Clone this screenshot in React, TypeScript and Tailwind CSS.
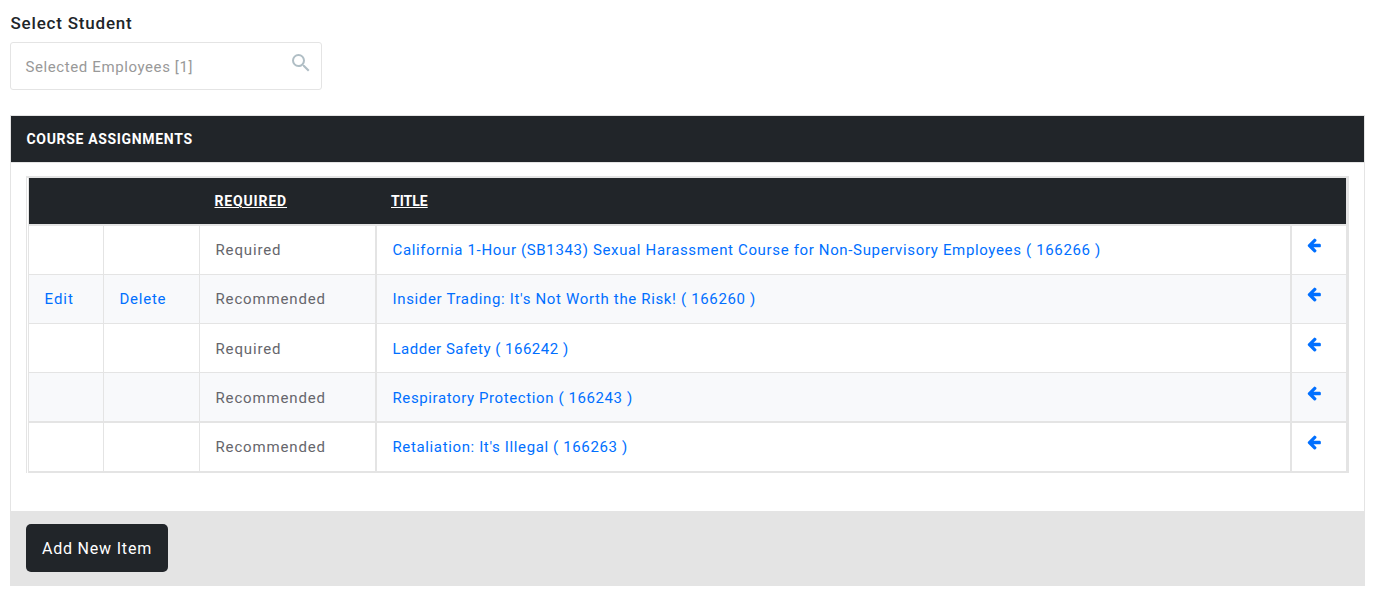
import { MdSearch } from "react-icons/md";
import clsx from "clsx";

type Course = {
  id: number;
  required: string;
  title: string;
  editable?: boolean;
  rowClass: string;
  cellClass: string;
  titleClass: string;
};

const courses: Course[] = [
  {
    id: 166266,
    required: "Required",
    title: "California 1-Hour (SB1343) Sexual Harassment Course for Non-Supervisory Employees",
    rowClass: "h-[49px] bg-white",
    cellClass: "border-b pt-[12px]",
    titleClass: "tracking-[0.65px]",
  },
  {
    id: 166260,
    required: "Recommended",
    title: "Insider Trading: It's Not Worth the Risk!",
    editable: true,
    rowClass: "h-[49px] bg-[#f8f9fb]",
    cellClass: "border-b pt-[12px]",
    titleClass: "tracking-[0.65px]",
  },
  {
    id: 166242,
    required: "Required",
    title: "Ladder Safety",
    rowClass: "h-[49px] bg-white",
    cellClass: "border-b pt-[13px]",
    titleClass: "tracking-[0.5px]",
  },
  {
    id: 166243,
    required: "Recommended",
    title: "Respiratory Protection",
    rowClass: "h-[50px] bg-[#f8f9fb]",
    cellClass: "border-b-2 pt-[13px]",
    titleClass: "tracking-[0.6px]",
  },
  {
    id: 166263,
    required: "Recommended",
    title: "Retaliation: It's Illegal",
    rowClass: "h-[50px] bg-white",
    cellClass: "border-b-2 pt-[12px]",
    titleClass: "tracking-[0.63px]",
  },
];

function ArrowLeftIcon() {
  return (
    <svg viewBox="0 0 1536 1792" fill="currentColor" className="-mt-px -ml-px h-4 w-[14px] text-[#006fff]">
      <path d="M1536 896v128q0 53-32.5 90.5t-84.5 37.5h-704l293 294q38 36 38 90t-38 90l-75 76q-37 37-90 37-52 0-91-37l-651-652q-37-37-37-90 0-52 37-91l651-650q38-38 91-38 52 0 90 38l75 74q38 38 38 91t-38 91l-293 293h704q52 0 84.5 37.5t32.5 90.5z" />
    </svg>
  );
}

function StudentPicker() {
  return (
    <div>
      <label className="block pl-[0.5px] text-[17px] leading-6 font-medium tracking-[0.8px] text-[#212529]">Select Student</label>
      <div className="mt-[7px] flex h-12 w-[312px] justify-between rounded-[3px] border border-[#e4e4e4] pl-[14.5px] pr-2">
        <span className="pt-3 text-[15px] leading-6 tracking-[0.6px] text-[#999]">Selected Employees [1]</span>
        <MdSearch size={24} className="mt-2 text-[#b0bec5]" />
      </div>
    </div>
  );
}

function CourseRow({ course }: { course: Course }) {
  const cell = clsx("border-[#e4e4e4] pl-[15.5px] align-top", course.cellClass);
  return (
    <tr className={course.rowClass}>
      <td className={clsx(cell, "border-r")}>
        {course.editable && <a href="#" className="tracking-[1px] text-[#006fff]">Edit</a>}
      </td>
      <td className={clsx(cell, "border-r")}>
        {course.editable && <a href="#" className="tracking-[0.75px] text-[#006fff]">Delete</a>}
      </td>
      <td className={clsx(cell, "border-r-2 tracking-[0.85px]")}>{course.required}</td>
      <td className={clsx(cell, "border-r-2")}>
        <a href="#" className={clsx("text-[#006fff]", course.titleClass)}>
          {course.title} ( {course.id} )
        </a>
      </td>
      <td className={cell}>
        <ArrowLeftIcon />
      </td>
    </tr>
  );
}

export default function App() {
  return (
    <div className="min-h-[596px] bg-white px-[10px] pt-[11px] font-['Roboto',sans-serif]">
      <StudentPicker />

      <section className="mt-[25px] w-[1355px] border border-[#e4e4e4]">
        <h2 className="flex h-[46px] items-center bg-[#212529] pl-[15.5px] text-[14px] font-bold tracking-[0.67px] text-white">
          COURSE ASSIGNMENTS
        </h2>

        <div className="h-[349px] border-t border-[#e4e4e4] px-[15px] pt-[13px]">
          <div className="w-[1323px] border-t-2 border-r-[3px] border-l border-[#e4e4e4] pl-px">
            <table className="w-[1318px] table-fixed border-separate border-spacing-0 border-l border-[#e4e4e4] text-[15px] leading-6 text-[#66666c]">
              <colgroup>
                <col className="w-[75px]" />
                <col className="w-[96px]" />
                <col className="w-[177px]" />
                <col className="w-[915px]" />
                <col className="w-[54px]" />
              </colgroup>
              <thead>
                <tr className="h-12 text-left text-[14px] text-white">
                  <th className="border-b-2 border-[#e4e4e4] bg-[#212529]" />
                  <th className="border-b-2 border-[#e4e4e4] bg-[#212529]" />
                  <th className="border-b-2 border-[#e4e4e4] bg-[#212529] pl-[14.5px] font-bold">
                    <a href="#" className="tracking-[0.85px] underline">REQUIRED</a>
                  </th>
                  <th className="border-b-2 border-[#e4e4e4] bg-[#212529] pl-[14px] font-bold">
                    <a href="#" className="underline">TITLE</a>
                  </th>
                  <th className="border-b-2 border-[#e4e4e4] bg-[#212529]" />
                </tr>
              </thead>
              <tbody>
                {courses.map((course) => (
                  <CourseRow key={course.id} course={course} />
                ))}
              </tbody>
            </table>
          </div>
        </div>

        <div className="h-[74px] bg-[#e4e4e4] pt-[13px] pl-[15px]">
          <button className="h-12 w-[142px] rounded-[5px] bg-[#212529] pt-px text-[16px] tracking-[0.8px] text-white">
            Add New Item
          </button>
        </div>
      </section>
    </div>
  );
}
